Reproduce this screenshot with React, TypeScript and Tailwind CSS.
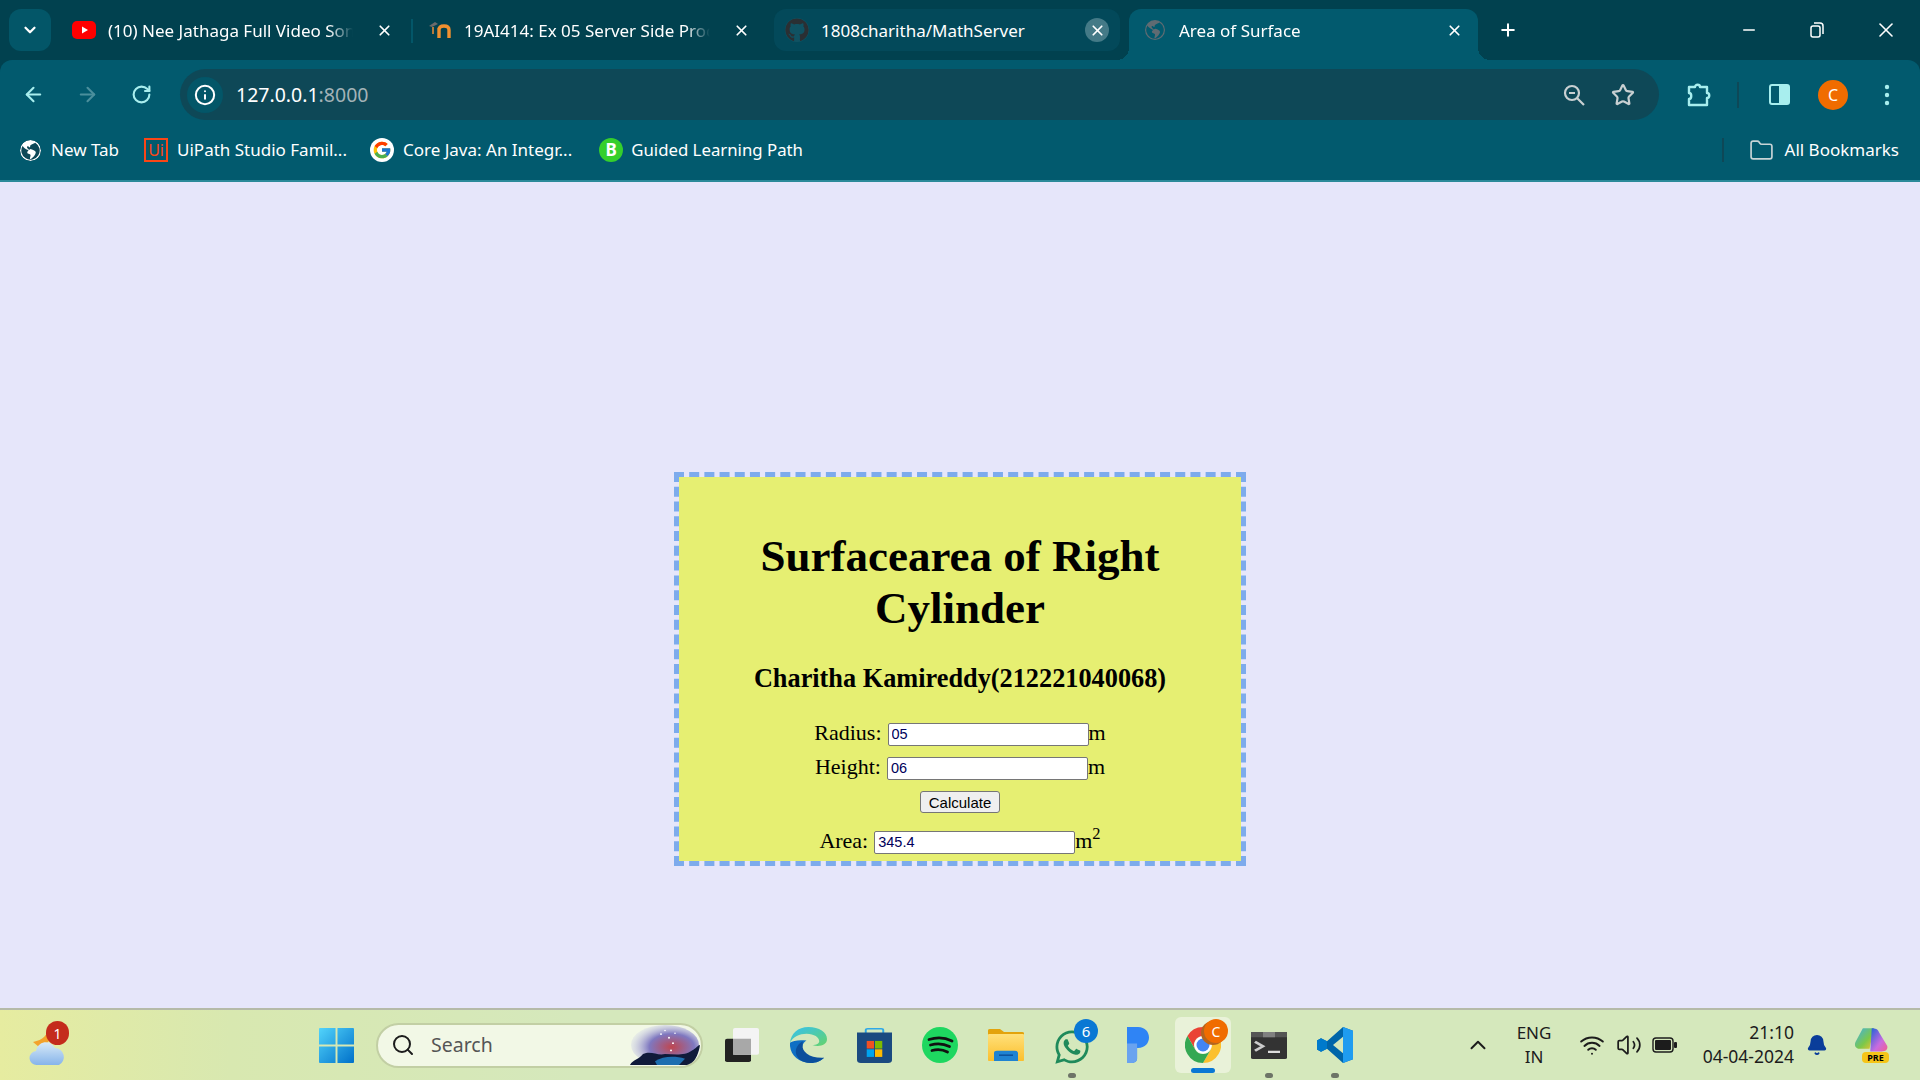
import React from 'react';
import { ArrowLeft, ArrowRight, Bell, ChevronDown, ChevronUp, Folder, Info, Minus, Plus, RotateCw, Search, Star, Volume2, Wifi, X } from 'lucide-react';
import { BsGlobeAmericas } from 'react-icons/bs';
import { FaGithub, FaWhatsapp } from 'react-icons/fa';
import { FcGoogle } from 'react-icons/fc';

// --- Favicons ---
const YouTubeIcon = () => (
    <svg width="24" height="18" viewBox="0 0 24 18">
        <rect width="24" height="18" rx="5" fill="#f00" />
        <path d="M10 5.5 16 9l-6 3.5z" fill="#fff" />
    </svg>
);

const MoodleIcon = () => (
    <svg width="24" height="18" viewBox="0 0 24 18">
        <path d="M11 17V7M11 9c0-3 2-4 5-4s5 1 5 4v8" fill="none" stroke="#f09030" strokeWidth="3.4" />
        <path d="M1 5 7 1l3 2-6 3z" fill="#6b6b6b" />
        <path d="M5 6v7" stroke="#b47a3c" strokeWidth="2" />
    </svg>
);

const UiPathIcon = () => (
    <div className="w-6 h-6 border-2 border-[#fa4616] flex items-center justify-center text-[#fa4616] text-[16px] leading-none">Ui</div>
);

const WindowsLogo = () => (
    <svg width="35" height="35" viewBox="0 0 36 36">
        <defs>
            <linearGradient id="win" x1="0" y1="0" x2="1" y2="1">
                <stop offset="0" stopColor="#52d4fb" />
                <stop offset="1" stopColor="#0070c9" />
            </linearGradient>
        </defs>
        <path d="M0 1a1 1 0 0 1 1-1h16v17H0zM19 0h16a1 1 0 0 1 1 1v16H19zM0 19h17v17H1a1 1 0 0 1-1-1zM19 19h17v16a1 1 0 0 1-1 1H19z" fill="url(#win)" />
    </svg>
);

const WeatherIcon = () => (
    <svg width="40" height="44" viewBox="0 0 40 44">
        <defs>
            <linearGradient id="cloud" x1="0" y1="0" x2="0" y2="1">
                <stop offset="0" stopColor="#d8eaf8" />
                <stop offset="1" stopColor="#86b4ea" />
            </linearGradient>
        </defs>
        <path d="M20 4c0 8-5 13-15 15l6 5c10-2 14-10 12-20z" fill="#f3a32c" />
        <path d="M9 42a7 7 0 0 1-1-14 10 10 0 0 1 19-3 9 9 0 0 1 4 17z" fill="url(#cloud)" />
    </svg>
);

const SearchArt = () => (
    <svg width="76" height="40" viewBox="0 0 76 44" preserveAspectRatio="none">
        <defs>
            <radialGradient id="neb" cx="0.6" cy="0.55" r="0.6">
                <stop offset="0" stopColor="#c0464f" />
                <stop offset="0.55" stopColor="#7f78c0" />
                <stop offset="1" stopColor="#c8cbe6" stopOpacity="0.3" />
            </radialGradient>
        </defs>
        <ellipse cx="40" cy="22" rx="34" ry="22" fill="url(#neb)" />
        <path d="M5 44c3-6 9-6 13-12 8-4 14 2 22 0 10 0 20 2 27-4 4-2 6-6 8-6-1 8-4 17-10 22z" fill="#101a3a" />
        <path d="M30 40c8-6 20-6 30-3l-6 7H32z" fill="#1d6eb0" />
        <g fill="#fff">
            <circle cx="36" cy="10" r="1" /><circle cx="44" cy="14" r="1" /><circle cx="48" cy="20" r="1" /><circle cx="40" cy="6" r="0.8" /><circle cx="50" cy="9" r="0.8" /><circle cx="46" cy="28" r="1" />
        </g>
    </svg>
);

const CopyIcon = () => (
    <svg width="36" height="34" viewBox="0 0 36 38" preserveAspectRatio="none">
        <rect x="1" y="12" width="26" height="26" rx="2" fill="#222" />
        <rect x="9" y="0" width="26" height="30" rx="2" fill="#f4f4f4" />
        <rect x="9" y="12" width="18" height="18" fill="#a8a8a8" />
    </svg>
);

const EdgeIcon = () => (
    <svg width="37" height="36" viewBox="0 0 38 48" preserveAspectRatio="none">
        <defs>
            <linearGradient id="edgeA" x1="0" y1="0" x2="1" y2="1">
                <stop offset="0" stopColor="#35c1f1" />
                <stop offset="1" stopColor="#65d36b" />
            </linearGradient>
        </defs>
        <path d="M19 0C8 0 1 9 0 21c3-8 10-12 17-12 8 0 13 5 13 10 0 3-3 5-7 5 6 3 15 1 15-8C38 7 30 0 19 0z" fill="url(#edgeA)" />
        <path d="M0 21c-1 15 8 27 21 27 6 0 11-3 14-7-8 4-19 1-22-8-2-7 1-13 4-15C9 17 3 18 0 21z" fill="#0f6fc4" />
        <path d="M13 24c-1 9 7 18 22 17-3 4-8 7-14 7C12 48 6 41 6 33c0-6 3-11 7-14z" fill="#0b4f9c" />
    </svg>
);

const StoreIcon = () => (
    <svg width="35" height="35" viewBox="0 0 36 46" preserveAspectRatio="none">
        <path d="M9 8V3a2 2 0 0 1 2-2h14a2 2 0 0 1 2 2v5" fill="none" stroke="#2fa8e8" strokeWidth="2" />
        <path d="M0 6h36v36a4 4 0 0 1-4 4H4a4 4 0 0 1-4-4z" fill="#1b4a80" />
        <rect x="10" y="17" width="7.5" height="10" fill="#f25022" />
        <rect x="18.5" y="17" width="7.5" height="10" fill="#7fba00" />
        <rect x="10" y="28" width="7.5" height="10" fill="#00a4ef" />
        <rect x="18.5" y="28" width="7.5" height="10" fill="#ffb900" />
    </svg>
);

const SpotifyIcon = () => (
    <svg width="36" height="36" viewBox="0 0 36 36">
        <circle cx="18" cy="18" r="18" fill="#1ed760" />
        <path d="M7 12.5c8-2.5 16-2 23 1.5M8.5 18c7-2 13-1.500 19 1.500M10 23.500c5-1.500 11-1 15.500 1.500" fill="none" stroke="#111" strokeWidth="2.8" strokeLinecap="round" />
    </svg>
);

const FilesIcon = () => (
    <svg width="36" height="32" viewBox="0 0 36 44" preserveAspectRatio="none">
        <defs>
            <linearGradient id="fold" x1="0" y1="0" x2="0" y2="1">
                <stop offset="0" stopColor="#ffe07a" />
                <stop offset="1" stopColor="#fbbf2d" />
            </linearGradient>
        </defs>
        <path d="M0 2a2 2 0 0 1 2-2h10l4 4h18a2 2 0 0 1 2 2v4H0z" fill="#e3a30c" />
        <rect y="7" width="36" height="37" rx="1" fill="url(#fold)" />
        <path d="M6 44V33a3 3 0 0 1 3-3h18a3 3 0 0 1 3 3v11z" fill="#1f83d2" />
        <rect x="11" y="35" width="14" height="2" fill="#0c4f9a" />
    </svg>
);

const PandoraIcon = () => (
    <svg width="22" height="36" viewBox="0 0 24 48" preserveAspectRatio="none">
        <path d="M0 0h12c8 0 12 7 12 14s-4 14-12 14h-1v14c0 4-3 6-6 6H0z" fill="#2f84f5" />
        <path d="M0 22h11v20c0 4-3 6-6 6H0z" fill="#6aa3ef" />
    </svg>
);

const ChromeIcon = () => (
    <svg width="36" height="36" viewBox="0 0 36 36">
        <path d="M18 0A18 18 0 0 1 33.600 9H18A9 9 0 0 0 10.200 22.500L2.400 9A18 18 0 0 1 18 0z" fill="#ea4335" />
        <path d="M33.600 9A18 18 0 0 1 18 36L25.800 22.500A9 9 0 0 0 18 9z" fill="#fbc02d" />
        <path d="M2.400 9 10.200 22.500A9 9 0 0 0 25.800 22.500L18 36A18 18 0 0 1 2.400 9z" fill="#34a853" />
        <circle cx="18" cy="18" r="8.500" fill="#fff" />
        <circle cx="18" cy="18" r="6.500" fill="#4285f4" />
    </svg>
);

const TerminalIcon = () => (
    <svg width="36" height="27" viewBox="0 0 36 36" preserveAspectRatio="none">
        <rect width="36" height="36" rx="2" fill="#333" />
        <rect width="36" height="7" fill="#555" />
        <rect x="12" width="12" height="7" fill="#808080" />
        <path d="m4 13 8 6-8 6" fill="none" stroke="#ccc" strokeWidth="3" />
        <rect x="17" y="25" width="12" height="3" fill="#ddd" />
    </svg>
);

const VsCodeIcon = () => (
    <svg width="36" height="36" viewBox="0 0 36 48" preserveAspectRatio="none">
        <path d="M26 0 36 5v38l-10 5L10 29l-6 4-4-3v-12l4-3 6 4z" fill="#0065a9" />
        <path d="M26 0 36 5v38l-10 5z" fill="#1f9cf0" />
        <path d="m26 13-10 11 10 11z" fill="#d5e8bc" />
        <path d="M0 18v12l4 3 6-4V19l-6-4z" fill="#007acc" />
    </svg>
);

const CopilotIcon = () => (
    <svg width="34" height="30" viewBox="0 0 46 44" preserveAspectRatio="none">
        <defs>
            <linearGradient id="copL" x1="0" y1="0" x2="1" y2="1">
                <stop offset="0" stopColor="#3fb0e8" />
                <stop offset="0.6" stopColor="#7cc84a" />
                <stop offset="1" stopColor="#f3c32e" />
            </linearGradient>
            <linearGradient id="copR" x1="0" y1="0" x2="1" y2="1">
                <stop offset="0" stopColor="#1a63d8" />
                <stop offset="0.6" stopColor="#c96be0" />
                <stop offset="1" stopColor="#f25f8e" />
            </linearGradient>
        </defs>
        <path d="M12 2h15l-6 30H8C2 32 0 27 2 22z" fill="url(#copL)" />
        <path d="M24 2c5 0 8 1 10 6l11 20c1 5-2 8-8 8H22z" fill="url(#copR)" />
    </svg>
);

// Chrome's toolbar glyphs, lucide's versions have different shapes
const ZoomGlyph = ({ className }: { className?: string }) => (
    <svg width="24" height="24" viewBox="0 0 24 24" fill="none" stroke="#c8d0d2" strokeWidth="2.2" className={className}>
        <circle cx="10" cy="10" r="7" />
        <path d="m15 15 7 7M7 10h6" />
    </svg>
);

const ExtensionGlyph = ({ className }: { className?: string }) => (
    <svg width="26" height="26" viewBox="0 0 26 26" fill="none" stroke="#a8eeee" strokeWidth="2.4" strokeLinejoin="round" className={className}>
        <path d="M3 5h6c0-3 5-3 5 0h7v6c3 0 3 5 0 5v7H3v-6c3 0 3-6 0-6z" />
    </svg>
);

const DotsGlyph = ({ className }: { className?: string }) => (
    <svg width="6" height="24" viewBox="0 0 6 24" fill="#a8eeee" className={className}>
        <circle cx="3" cy="4" r="2.2" />
        <circle cx="3" cy="12" r="2.2" />
        <circle cx="3" cy="20" r="2.2" />
    </svg>
);

// --- Browser chrome ---
interface TabProps {
    width: string;
    icon: React.ReactNode;
    title: string;
}

const Tab: React.FC<TabProps> = ({ width, icon, title }) => (
    <div className={`${width} h-[42px] flex items-center shrink-0`}>
        <div className="w-[26px] flex justify-center shrink-0">{icon}</div>
        <span className="ml-[11px] pt-[2px] flex-1 min-w-0 overflow-hidden whitespace-nowrap text-[17px] text-white [mask-image:linear-gradient(to_right,black_90%,transparent)]">{title}</span>
        <div className="ml-[19px] w-6 h-6 shrink-0 rounded-full flex items-center justify-center">
            <X size={17} strokeWidth={2.4} className="text-white" />
        </div>
    </div>
);

const TabStrip = () => (
    <div className="h-[60px] flex pt-[9px] pl-[9px] items-start">
        <div className="w-[42px] h-[42px] rounded-xl bg-[#035668] flex items-center justify-center shrink-0">
            <ChevronDown size={18} strokeWidth={3} className="text-white" />
        </div>
        <div className="ml-[20px]">
            <Tab width="w-[325px]" icon={<YouTubeIcon />} title="(10) Nee Jathaga Full Video Song" />
        </div>
        <div className="ml-[15px] mt-[10px] w-[2px] h-[24px] bg-[#035668] shrink-0" />
        <div className="ml-[14px]">
            <Tab width="w-[326px]" icon={<MoodleIcon />} title="19AI414: Ex 05 Server Side Processing" />
        </div>
        <div className="ml-[21px] w-[346px] h-[42px] rounded-xl bg-[#03495a] flex items-center pl-[10px] pr-[11px] shrink-0">
            <div className="w-[26px] flex justify-center shrink-0"><FaGithub size={24} className="text-[#2a2f33] bg-white/5 rounded-full" /></div>
            <span className="ml-[11px] pt-[2px] flex-1 text-[17px] text-white whitespace-nowrap">1808charitha/MathServer</span>
            <div className="w-6 h-6 rounded-full bg-[#447a87] flex items-center justify-center">
                <X size={17} strokeWidth={2.4} className="text-white" />
            </div>
        </div>
        {/* Active tab, the flares join it to the toolbar */}
        <div className="relative ml-[9px] w-[349px] h-[51px] bg-[#025a6e] rounded-t-xl pl-[13px] pr-[12px] flex items-start shrink-0">
            <div className="absolute -left-3 bottom-0 w-3 h-3 bg-[radial-gradient(circle_at_0_0,transparent_12px,#025a6e_12px)]" />
            <div className="absolute -right-3 bottom-0 w-3 h-3 bg-[radial-gradient(circle_at_100%_0,transparent_12px,#025a6e_12px)]" />
            <Tab width="w-full" icon={<BsGlobeAmericas size={20} className="text-[#5f6b72]" />} title="Area of Surface" />
        </div>
        <div className="ml-[20px] h-[42px] flex items-center shrink-0">
            <Plus size={20} strokeWidth={2.4} className="text-white" />
        </div>
        <div className="ml-auto h-[42px] flex items-center shrink-0">
            <div className="w-[68px] flex justify-center"><Minus size={18} className="text-white" /></div>
            <div className="w-[68px] flex justify-center">
                <svg width="14" height="16" viewBox="0 0 14 16" fill="none" stroke="#fff" strokeWidth="1.5">
                    <rect x="1" y="4" width="9" height="11" rx="2" />
                    <path d="M4 1h6a3 3 0 0 1 3 3v8" />
                </svg>
            </div>
            <div className="w-[69px] flex justify-center"><X size={24} strokeWidth={1.6} className="text-white" /></div>
        </div>
    </div>
);

const Toolbar = () => (
    <div className="h-[60px] flex items-end">
        <div className="w-[174px] h-[51px] flex items-center shrink-0">
            <div className="w-[66px] flex justify-center"><ArrowLeft size={23} strokeWidth={2.2} className="text-[#a8eeee]" /></div>
            <div className="w-[42px] flex justify-center"><ArrowRight size={23} strokeWidth={2.2} className="text-[#4b8f9c]" /></div>
            <div className="w-[66px] flex justify-center"><RotateCw size={21} strokeWidth={2.4} className="text-[#a8eeee]" /></div>
        </div>
        <div className="ml-[6px] w-[1479px] h-[51px] rounded-full bg-[#0e4857] flex items-center pl-[7px] pr-[24px] shrink-0">
            <div className="w-[36px] h-[36px] rounded-full bg-[#035668] flex items-center justify-center shrink-0">
                <Info size={22} strokeWidth={2.2} className="text-white" />
            </div>
            <span className="ml-[13px] text-[19.5px] text-white whitespace-nowrap">127.0.0.1<span className="text-[#a3b3b8]">:8000</span></span>
            <ZoomGlyph className="ml-auto" />
            <Star size={24} strokeWidth={2.2} className="ml-[25px] text-[#c8d0d2]" />
        </div>
        <div className="h-[51px] flex items-center shrink-0">
            <ExtensionGlyph className="ml-[27px]" />
            <div className="ml-[25px] w-[2px] h-[26px] bg-[#0e4857]" />
            <div className="ml-[30px] w-[21px] h-[21px] rounded-[3px] border-2 border-[#a8eeee] flex justify-end">
                <div className="w-[9px] bg-[#a8eeee]" />
            </div>
            <div className="ml-[28px] w-[30px] h-[30px] rounded-full bg-[#f06c00] flex items-center justify-center text-white text-[16px]">C</div>
            <DotsGlyph className="ml-[36px]" />
        </div>
    </div>
);

const BookmarkBar = () => (
    <div className="h-[62px] border-b-2 border-b-[#2b8a99] flex items-center text-[17px] text-white">
        <BsGlobeAmericas size={21} className="ml-[20px] shrink-0 bg-[#0e4857] rounded-full text-white" />
        <span className="ml-[10px] whitespace-nowrap">New Tab</span>
        <div className="ml-[25px] shrink-0"><UiPathIcon /></div>
        <span className="ml-[9px] whitespace-nowrap">UiPath Studio Famil...</span>
        <div className="ml-[23px] w-6 h-6 rounded-full bg-white flex items-center justify-center shrink-0"><FcGoogle size={20} /></div>
        <span className="ml-[9px] whitespace-nowrap">Core Java: An Integr...</span>
        <div className="ml-[27px] w-6 h-6 rounded-full bg-[#35cf2c] flex items-center justify-center text-white font-bold text-[17px] shrink-0">B</div>
        <span className="ml-[8px] whitespace-nowrap text-[16.800px]">Guided Learning Path</span>
        <div className="ml-auto w-[2px] h-6 bg-[#0e4857] shrink-0" />
        <Folder size={25} strokeWidth={1.6} className="ml-[25px] text-[#c8d4d6] shrink-0" />
        <span className="ml-[11px] mr-[21px] whitespace-nowrap">All Bookmarks</span>
    </div>
);

// --- Page content ---
const Field = ({ label, value, unit }: { label: string; value: string; unit: React.ReactNode }) => (
    <div className="h-[34px] flex items-center justify-center text-[22px] text-black">
        <span className="mr-[6px] pb-[4px]">{label}</span>
        <input
            readOnly
            value={value}
            className="w-[201px] h-[23px] bg-white border border-[#767676] rounded-[2px] px-[3px] text-[14.5px] text-[#00005a] font-['Liberation_Sans',sans-serif] outline-none"
        />
        <span className="pb-[4px]">{unit}</span>
    </div>
);

const AreaCard = () => (
    <div className="w-[572px] h-[394px] border-[5px] border-dashed border-[#7dabec] bg-[#e6ef72] text-center font-['Liberation_Serif',serif] text-black [background-clip:padding-box]">
        <h1 className="mt-[53px] px-[40px] text-[45px] leading-[52px] font-bold">Surfacearea of Right Cylinder</h1>
        <h2 className="mt-[30px] text-[26.3px] leading-[30px] font-bold">Charitha Kamireddy(212221040068)</h2>
        <div className="mt-[23px]">
            <Field label="Radius:" value="05" unit="m" />
            <Field label="Height:" value="06" unit="m" />
        </div>
        <button className="mt-[6px] block mx-auto w-[80px] h-[22px] bg-[#efefef] border border-[#767676] rounded-[3px] text-[15px] text-black font-['Liberation_Sans',sans-serif]">Calculate</button>
        <div className="mt-[12px]">
            <Field label="Area:" value="345.4" unit={<>m<sup>2</sup></>} />
        </div>
    </div>
);

// --- Windows taskbar ---
const TaskItem = ({ x, children, dot }: { x: string; children: React.ReactNode; dot?: boolean }) => (
    <div className={`relative ${x} w-[66px] h-[56px] flex items-center justify-center shrink-0`}>
        {children}
        {dot && <div className="absolute bottom-[-5px] left-[29px] w-2 h-[5px] rounded-full bg-[#6d7467]" />}
    </div>
);

const Taskbar = () => (
    <div className="h-[72px] border-t-2 border-t-[#b5baa8] bg-[linear-gradient(to_right,#e6eca0_0%,#d8e8b0_12%,#d5e8bc_30%,#d5e8bc_100%)] flex items-center font-['Noto_Sans',sans-serif] text-[#1c1c1c]">
        <div className="relative ml-[28px] w-[40px] shrink-0">
            <WeatherIcon />
            <div className="absolute -top-[2px] left-[18px] w-[23px] h-[24px] rounded-full bg-[#c42b1c] text-white text-[14px] flex items-center justify-center">1</div>
        </div>
        <div className="ml-[251px] shrink-0"><WindowsLogo /></div>
        <div className="ml-[22px] w-[327px] h-[45px] rounded-full bg-[#f2f8e6] border-2 border-[#c2cfa4] flex items-center pl-[13px] shrink-0 overflow-hidden">
            <Search size={24} strokeWidth={2} className="text-[#1c1c1c] shrink-0" />
            <span className="ml-[16px] text-[19.5px] text-[#555]">Search</span>
            <div className="ml-auto flex"><SearchArt /></div>
        </div>
        <TaskItem x="ml-[6px]"><CopyIcon /></TaskItem>
        <TaskItem x=""><EdgeIcon /></TaskItem>
        <TaskItem x=""><StoreIcon /></TaskItem>
        <TaskItem x=""><SpotifyIcon /></TaskItem>
        <TaskItem x=""><FilesIcon /></TaskItem>
        <TaskItem x="" dot>
            <FaWhatsapp size={38} className="text-[#1f8a5b] mt-[4px]" />
            <div className="absolute top-[2px] left-[35px] w-[24px] h-[24px] rounded-full bg-[#0a78d4] text-white text-[15px] flex items-center justify-center">6</div>
        </TaskItem>
        <TaskItem x=""><PandoraIcon /></TaskItem>
        <div className="relative w-[56px] h-[56px] ml-[4px] mr-[5px] rounded-md bg-[#e9f2d9] flex items-center justify-center shrink-0">
            <ChromeIcon />
            <div className="absolute top-[2px] left-[29px] w-[24px] h-[24px] rounded-full bg-[#f06c00] shadow-[-3px_2px_0_#b3651e] text-white text-[14px] flex items-center justify-center">C</div>
            <div className="absolute bottom-0 left-[16px] w-[24px] h-[5px] rounded-full bg-[#0a78d4]" />
        </div>
        <TaskItem x="" dot><TerminalIcon /></TaskItem>
        <TaskItem x="" dot><VsCodeIcon /></TaskItem>
        <ChevronUp size={26} strokeWidth={1.8} className="ml-[97px] shrink-0" />
        <div className="ml-[13px] w-[60px] text-center text-[17px] leading-[24px] shrink-0">ENG<br />IN</div>
        <Wifi size={26} strokeWidth={1.8} className="ml-[15px] shrink-0" />
        <Volume2 size={26} strokeWidth={1.6} className="ml-[11px] shrink-0" />
        <svg width="26" height="16" viewBox="0 0 26 16" className="ml-[10px] shrink-0">
            <rect x="1" y="1" width="20" height="14" rx="3" fill="none" stroke="#1c1c1c" strokeWidth="1.4" />
            <rect x="3" y="3" width="16" height="10" rx="1" fill="#1c1c1c" />
            <rect x="22" y="5" width="3" height="6" rx="1" fill="#1c1c1c" />
        </svg>
        <div className="ml-[22px] w-[94px] pb-[2px] text-right text-[17.5px] leading-[24px] whitespace-nowrap shrink-0">21:10<br />04-04-2024</div>
        <Bell size={22} fill="#0a3d9a" className="ml-[12px] text-[#0a3d9a] shrink-0" />
        <div className="relative ml-[26px] w-[34px] h-[36px] shrink-0">
            <CopilotIcon />
            <div className="absolute bottom-0 left-[8px] w-[27px] h-[11px] rounded-sm bg-[#f5c518] text-[9px] leading-[11px] font-bold text-center text-black">PRE</div>
        </div>
    </div>
);

export default function App() {
    return (
        <div className="w-[1920px] h-[1080px] flex flex-col overflow-hidden font-['Noto_Sans',sans-serif]">
            <div className="bg-[#01414f]">
                <TabStrip />
                <div className="bg-[#025a6e] rounded-t-xl">
                    <Toolbar />
                    <BookmarkBar />
                </div>
            </div>
            <div className="flex-1 bg-[#e6e6fa] flex justify-center pt-[290px]">
                <AreaCard />
            </div>
            <Taskbar />
        </div>
    );
}
